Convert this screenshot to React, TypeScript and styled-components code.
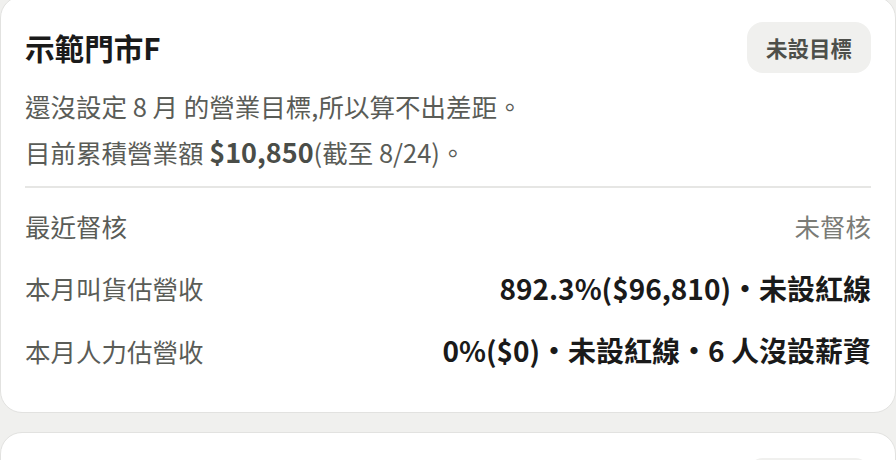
import React, { FC } from 'react';
import styled, { createGlobalStyle } from 'styled-components';

const GlobalStyle = createGlobalStyle`
  html, body {
    margin: 0;
    padding: 0;
    background: #f0f0ee;
    font-family: "Noto Sans CJK TC", "Noto Sans", sans-serif;
    overflow: hidden;
  }
  * {
    box-sizing: border-box;
  }
`;

type Row = {
  label: string;
  value: string;
  muted?: boolean;
};

const ROWS: Row[] = [
  { label: '最近督核', value: '未督核', muted: true },
  { label: '本月叫貨估營收', value: '892.3%($96,810)・未設紅線' },
  { label: '本月人力估營收', value: '0%($0)・未設紅線・6 人沒設薪資' },
];

const StoreCard: FC<{ name: string; rows: Row[] }> = ({ name, rows }) => {
  return (
    <Card>
      <Header>
        <Title>{name}</Title>
        <Chip>未設目標</Chip>
      </Header>
      <Summary>
        <Line>還沒設定 8 月 的營業目標,所以算不出差距。</Line>
        <Line>
          目前累積營業額 <Strong>$10,850</Strong>(截至 8/24)。
        </Line>
      </Summary>
      <Divider />
      <Rows>
        {rows.map((r) => (
          <RowItem key={r.label}>
            <Label>{r.label}</Label>
            <Value $muted={r.muted}>{r.value}</Value>
          </RowItem>
        ))}
      </Rows>
    </Card>
  );
};

const App: FC = () => {
  return (
    <>
      <GlobalStyle />
      <List>
        <StoreCard name="示範門市F" rows={ROWS} />
        <Card>
          <Header>
            <Title />
            <Chip>未設目標</Chip>
          </Header>
        </Card>
      </List>
    </>
  );
};

const List = styled.div`
  display: flex;
  flex-direction: column;
  gap: 19px;
  margin-top: -4px;
`;

const Card = styled.section`
  background: #fff;
  border: 1px solid #e2e2e0;
  border-radius: 22px;
  padding: 25px 24px 39px 24px;
  width: 896px;
`;

const Header = styled.div`
  display: flex;
  align-items: center;
  justify-content: space-between;
  height: 51px;
`;

const Title = styled.h2`
  margin: 0;
  font-size: 29.6px;
  font-weight: 700;
  color: #1a1a1a;
  line-height: 1;
`;

const Chip = styled.span`
  display: inline-flex;
  align-items: center;
  height: 51px;
  padding: 0 19px;
  border-radius: 16px;
  background: #f0f0ee;
  color: #4d4f4a;
  font-size: 21.5px;
  font-weight: 700;
`;

const Summary = styled.div`
  margin-top: 10px;
  color: #5a5c57;
  font-size: 25.5px;
  line-height: 46px;
`;

const Line = styled.div`
  height: 46px;
`;

const Strong = styled.strong`
  color: #4a4d48;
  font-size: 27px;
  line-height: 0;
  font-weight: 700;
`;

const Divider = styled.hr`
  margin: 11px 0 0 0;
  border: none;
  height: 2px;
  background: #e6e6e4;
`;

const Rows = styled.div`
  display: flex;
  flex-direction: column;
  gap: 16.5px;
  padding-top: 14px;
`;

const RowItem = styled.div`
  display: flex;
  align-items: center;
  justify-content: space-between;
  height: 46px;
  font-size: 25.5px;
`;

const Label = styled.span`
  color: #5a5c57;
`;

const Value = styled.span<{ $muted?: boolean }>`
  color: ${(p) => (p.$muted ? '#7a7b76' : '#1a1a1a')};
  font-weight: ${(p) => (p.$muted ? 400 : 700)};
  font-size: ${(p) => (p.$muted ? '25.5px' : '28px')};
`;

export default App;
